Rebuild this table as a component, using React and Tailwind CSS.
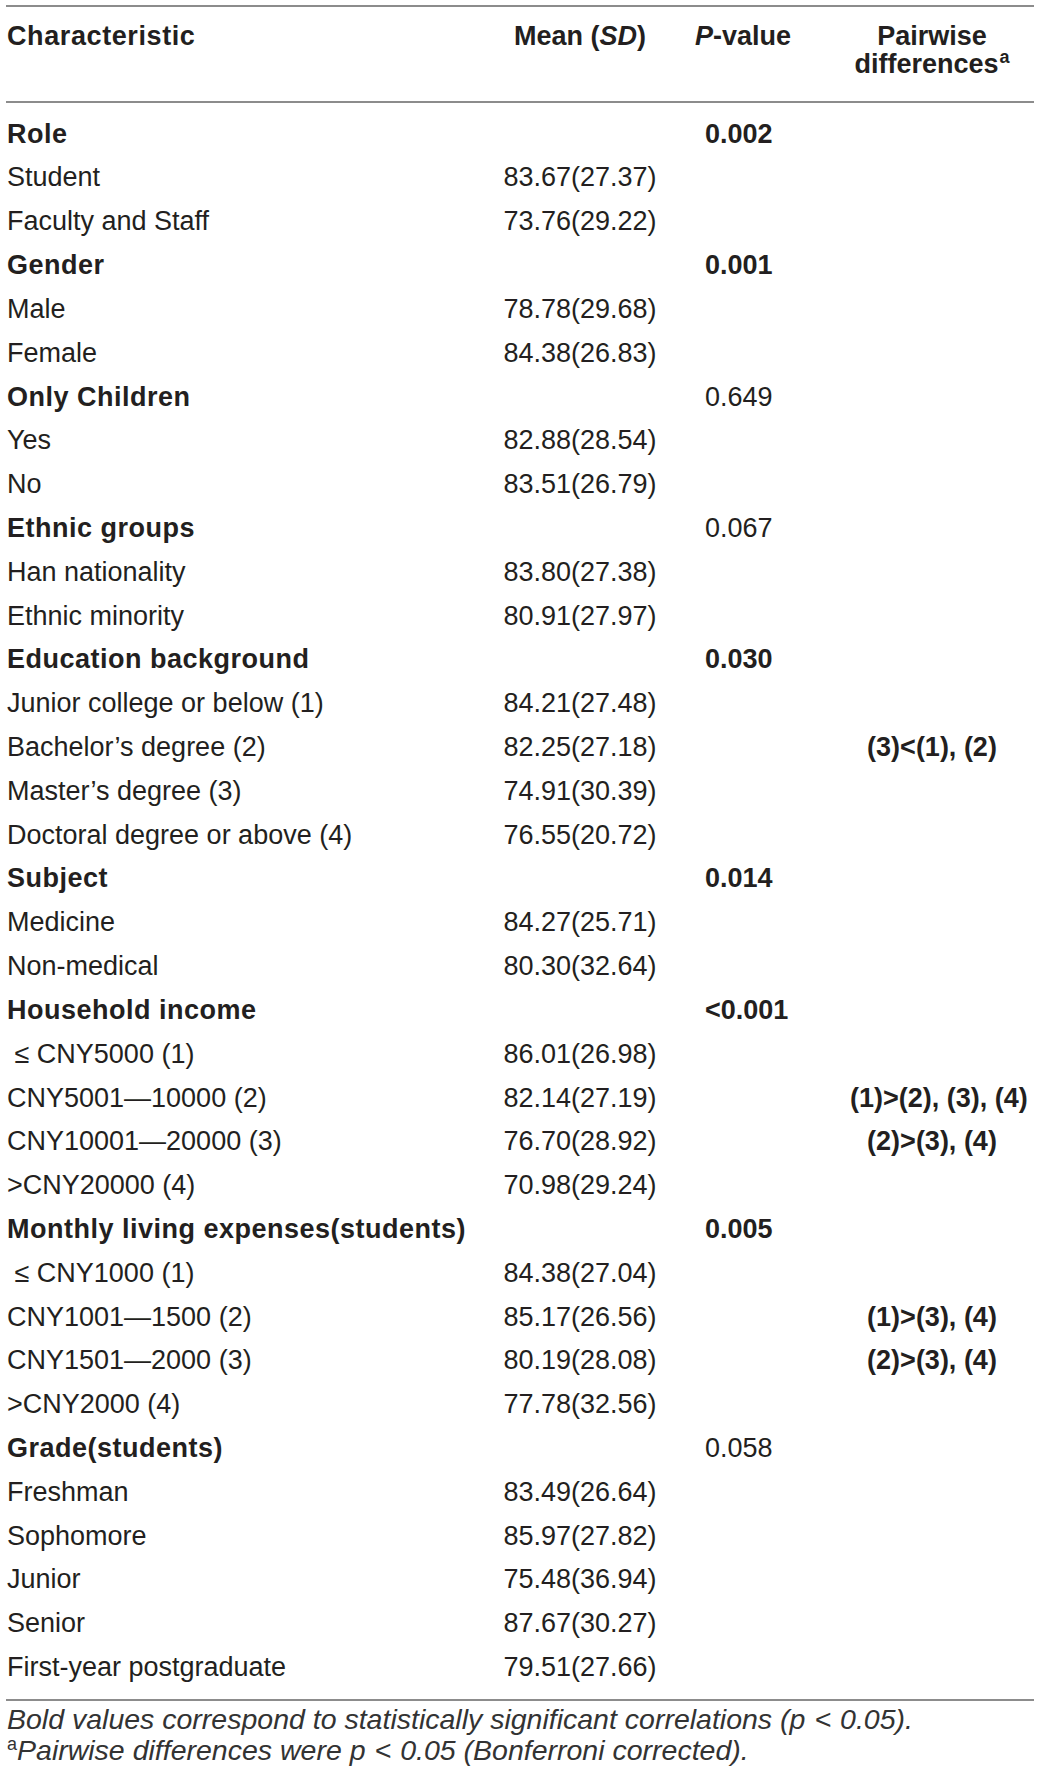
const rows = [
  { label: 'Role', head: true, p: '0.002', pBold: true },
  { label: 'Student', mean: '83.67(27.37)' },
  { label: 'Faculty and Staff', mean: '73.76(29.22)' },
  { label: 'Gender', head: true, p: '0.001', pBold: true },
  { label: 'Male', mean: '78.78(29.68)' },
  { label: 'Female', mean: '84.38(26.83)' },
  { label: 'Only Children', head: true, p: '0.649' },
  { label: 'Yes', mean: '82.88(28.54)' },
  { label: 'No', mean: '83.51(26.79)' },
  { label: 'Ethnic groups', head: true, p: '0.067' },
  { label: 'Han nationality', mean: '83.80(27.38)' },
  { label: 'Ethnic minority', mean: '80.91(27.97)' },
  { label: 'Education background', head: true, p: '0.030', pBold: true },
  { label: 'Junior college or below (1)', mean: '84.21(27.48)' },
  { label: 'Bachelor\u2019s degree (2)', mean: '82.25(27.18)', diff: '(3)<(1), (2)' },
  { label: 'Master\u2019s degree (3)', mean: '74.91(30.39)' },
  { label: 'Doctoral degree or above (4)', mean: '76.55(20.72)' },
  { label: 'Subject', head: true, p: '0.014', pBold: true },
  { label: 'Medicine', mean: '84.27(25.71)' },
  { label: 'Non-medical', mean: '80.30(32.64)' },
  { label: 'Household income', head: true, p: '<0.001', pBold: true },
  { label: '\u00a0\u2264 CNY5000 (1)', mean: '86.01(26.98)' },
  { label: 'CNY5001\u201410000 (2)', mean: '82.14(27.19)', diff: '(1)>(2), (3), (4)' },
  { label: 'CNY10001\u201420000 (3)', mean: '76.70(28.92)', diff: '(2)>(3), (4)' },
  { label: '>CNY20000 (4)', mean: '70.98(29.24)' },
  { label: 'Monthly living expenses(students)', head: true, p: '0.005', pBold: true },
  { label: '\u00a0\u2264 CNY1000 (1)', mean: '84.38(27.04)' },
  { label: 'CNY1001\u20141500 (2)', mean: '85.17(26.56)', diff: '(1)>(3), (4)' },
  { label: 'CNY1501\u20142000 (3)', mean: '80.19(28.08)', diff: '(2)>(3), (4)' },
  { label: '>CNY2000 (4)', mean: '77.78(32.56)' },
  { label: 'Grade(students)', head: true, p: '0.058' },
  { label: 'Freshman', mean: '83.49(26.64)' },
  { label: 'Sophomore', mean: '85.97(27.82)' },
  { label: 'Junior', mean: '75.48(36.94)' },
  { label: 'Senior', mean: '87.67(30.27)' },
  { label: 'First-year postgraduate', mean: '79.51(27.66)' },
];

const cols = 'grid grid-cols-[480px_188px_176px_164px]';

function App() {
  return (
    <div className="w-[1040px] min-h-[1781px] bg-white px-[6px] pt-[5px] font-['Liberation_Sans',Arial,sans-serif] text-[27px] text-[#231f20]">
      <div className="border-t-2 border-[#8c8c8c]" />

      {/* header */}
      <div className={`${cols} pt-[15px] pb-[23px] font-bold leading-[28px]`}>
        <div className="pl-[1px] tracking-[0.6px]">Characteristic</div>
        <div className="text-center">
          Mean (<i>SD</i>)
        </div>
        <div className="pl-[21px]">
          <i>P</i>-value
        </div>
        <div className="text-center">
          Pairwise
          <br />
          differences<sup className="text-[18px] relative -top-[10px] ml-[1px]">a</sup>
        </div>
      </div>
      <div className="border-t-2 border-[#8c8c8c]" />

      {/* body */}
      <div className="pt-[9px] pb-[10px]">
        {rows.map((r, i) => (
          <div key={i} className={`${cols} h-[43.82px] items-center whitespace-nowrap`}>
            <div className={r.head ? 'pl-[1px] font-bold tracking-[0.5px]' : 'pl-[1px]'}>{r.label}</div>
            <div className="text-center">{r.mean}</div>
            <div className={r.pBold ? 'pl-[31px] font-bold' : 'pl-[31px]'}>{r.p}</div>
            <div className="text-center font-bold">{r.diff}</div>
          </div>
        ))}
      </div>
      <div className="border-t-2 border-[#8c8c8c]" />

      {/* notes */}
      <div className="pt-[3px] pl-[1px] text-[28.5px] leading-[31px] italic text-[#333]">
        <p>
          Bold values correspond to statistically significant correlations (p<span className="mx-[9px]">&lt;</span>0.05).
        </p>
        <p>
          <sup className="not-italic text-[18px] relative -top-[10px]">a</sup>Pairwise differences were p<span className="mx-[9px]">&lt;</span>0.05 (Bonferroni corrected).
        </p>
      </div>
    </div>
  );
}

export default App;
